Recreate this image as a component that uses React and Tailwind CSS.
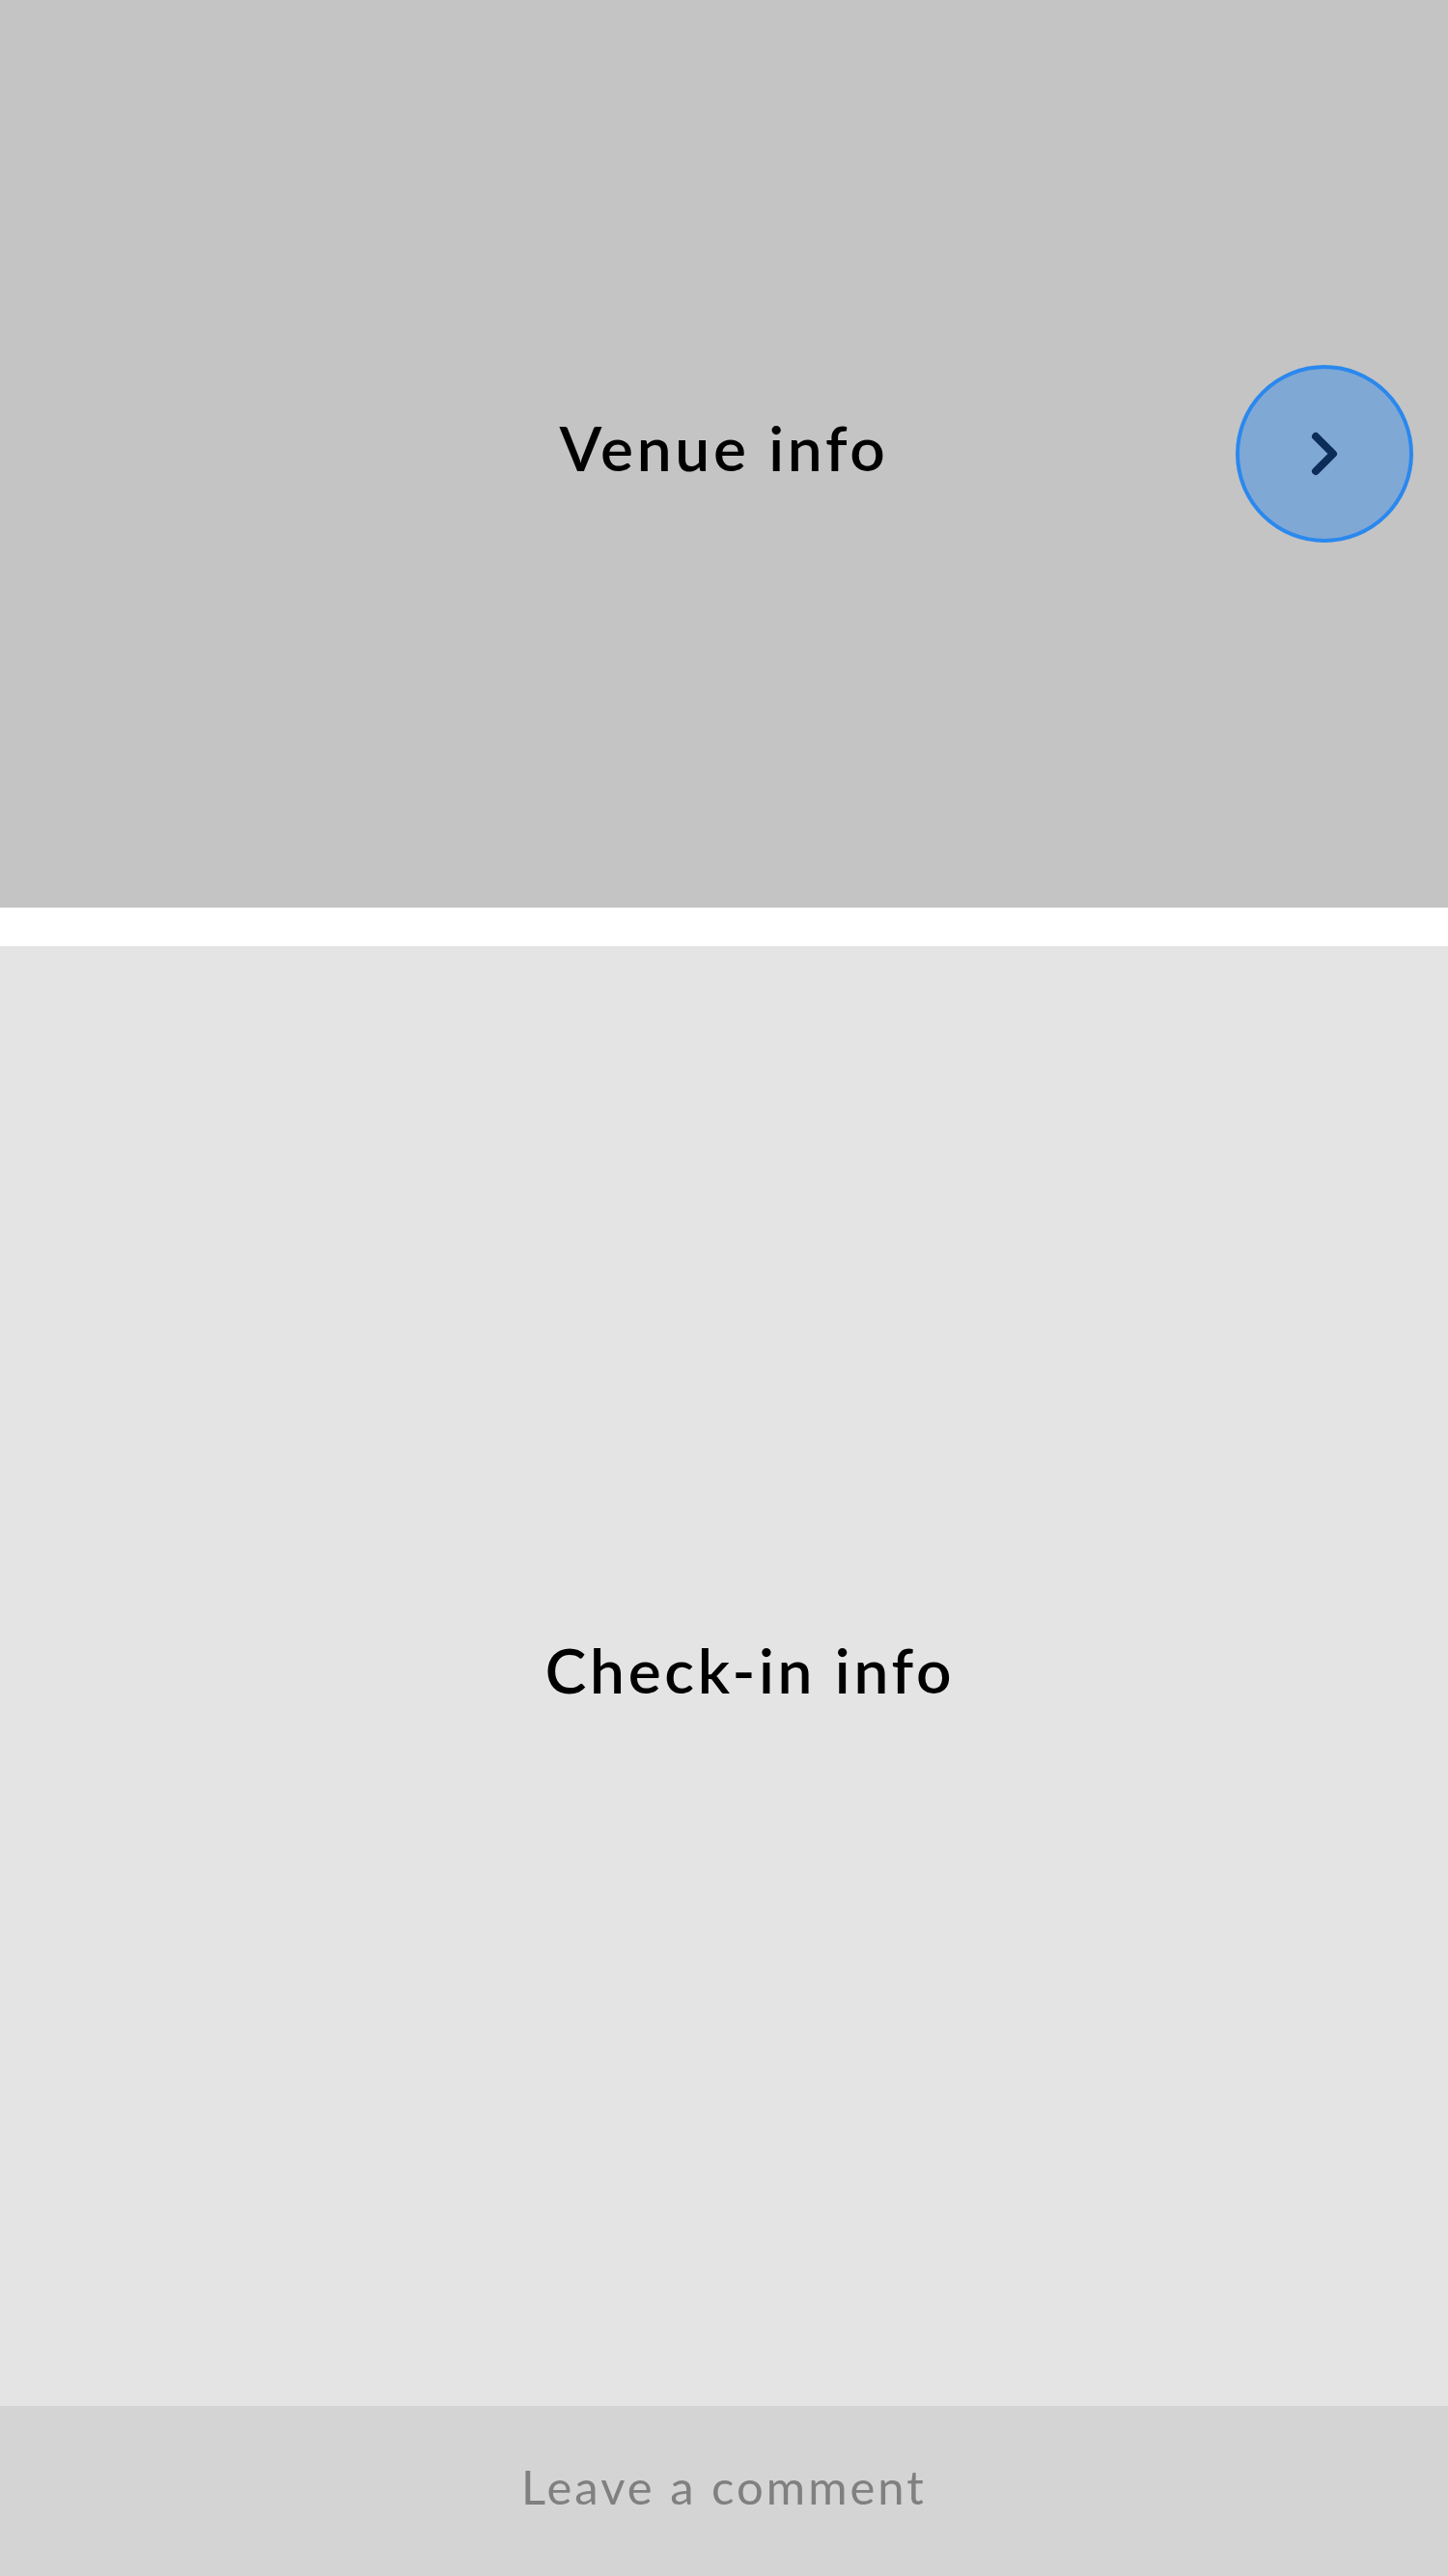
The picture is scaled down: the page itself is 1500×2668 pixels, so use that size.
export default function App() {
  return (
    <div className="w-[1500px] h-[2668px] flex flex-col bg-white" style={{ fontFamily: 'Lato, "Open Sans", sans-serif' }}>
      <section className="relative h-[940px] bg-[#c4c4c4] flex items-center justify-center shrink-0">
        <h2 className="text-[64px] font-semibold text-black leading-none tracking-[3.7px] mb-[12px]">Venue info</h2>
        <button className="absolute right-[36px] top-[378px] w-[184px] h-[184px] rounded-full bg-[#80a8d5] border-[4px] border-[#2a88ee] flex items-center justify-center">
          <svg width="40" height="56" viewBox="0 0 40 56" className="ml-[2px]">
            <path d="M10 10 L28 28 L10 46" fill="none" stroke="#0c2d57" strokeWidth="8" strokeLinecap="round" strokeLinejoin="round" />
          </svg>
        </button>
      </section>
      <div className="h-[40px] shrink-0 bg-white" />
      <section className="h-[1512px] bg-[#e4e4e4] flex items-center justify-center pl-[54px] shrink-0">
        <h2 className="text-[64px] font-semibold text-black leading-none tracking-[3.7px] mb-[12px]">Check-in info</h2>
      </section>
      <footer className="h-[176px] bg-[#d4d4d4] flex items-center justify-center shrink-0">
        <span className="text-[49px] font-normal text-[#808080] leading-none tracking-[3px] mb-[10px]">Leave a comment</span>
      </footer>
    </div>
  );
}
